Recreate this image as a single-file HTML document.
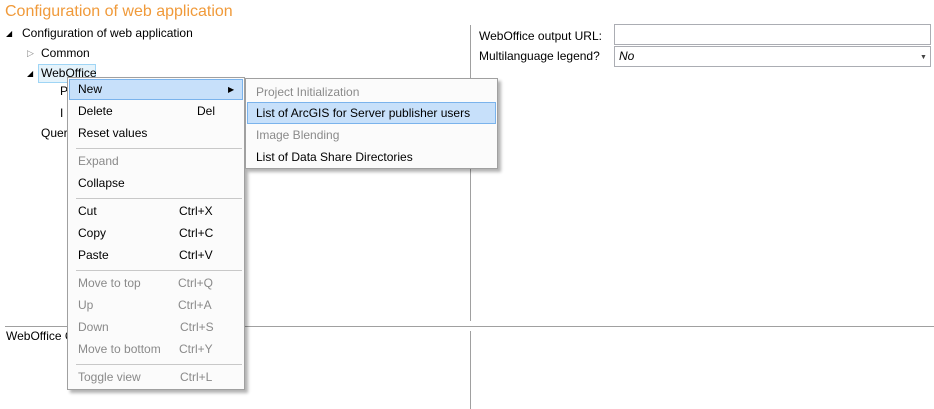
<!DOCTYPE html>
<html><head><style>
*{margin:0;padding:0;box-sizing:border-box}
body{width:934px;height:409px;background:#fff;position:relative;overflow:hidden;font-family:"Liberation Sans",sans-serif;font-size:12px;color:#000}
.a{position:absolute;white-space:nowrap;line-height:14px}
.title{left:5px;top:2px;font-size:16px;color:#f09a3a;line-height:20px}
.menu{position:absolute;background:#fbfbfb;border:1px solid #a0a0a0;box-shadow:3px 3px 3px rgba(0,0,0,0.3)}
.it{position:absolute;left:10px;line-height:14px;white-space:nowrap}
.g{color:#8a8a8a}
.sep{position:absolute;left:8px;right:2px;height:1px;background:#c8c8c8}
.hl{position:absolute;background:#c7e0fa;border:1px solid #7ab3ec}
</style></head><body>
<div class="a title">Configuration of web application</div>
<div class="a" style="left:6px;top:27px;font-size:8px">&#9698;</div>
<div class="a" style="left:22px;top:26px">Configuration of web application</div>
<div class="a" style="left:27px;top:46px;font-size:9px;color:#888">&#9655;</div>
<div class="a" style="left:41px;top:46px">Common</div>
<div class="a" style="left:27px;top:67px;font-size:8px">&#9698;</div>
<div style="position:absolute;left:38px;top:64px;width:58px;height:19px;background:#e5f3fb;border:1px solid #9fd5f5"></div>
<div class="a" style="left:41px;top:66px">WebOffice</div>
<div class="a" style="left:60px;top:84px">P</div>
<div class="a" style="left:60px;top:106px">I</div>
<div class="a" style="left:41px;top:126px">Query</div>
<div class="a" style="left:6px;top:329px">WebOffice C</div>
<div style="position:absolute;left:470px;top:25px;width:1px;height:296px;background:#a0a0a0"></div>
<div style="position:absolute;left:470px;top:331px;width:1px;height:78px;background:#a0a0a0"></div>
<div style="position:absolute;left:5px;top:326px;width:929px;height:1px;background:#a0a0a0"></div>
<div class="a" style="left:479px;top:29px">WebOffice output URL:</div>
<div class="a" style="left:479px;top:49px">Multilanguage legend?</div>
<div style="position:absolute;left:614px;top:24px;width:317px;height:21px;border:1px solid #abadb3;background:#fff"></div>
<div style="position:absolute;left:614px;top:46px;width:317px;height:21px;border:1px solid #abadb3;background:#fff"></div>
<div class="a" style="left:619px;top:49px;font-style:italic">No</div>
<div class="a" style="left:920px;top:51px;font-size:7px;color:#444">&#9660;</div>

<div class="menu" style="left:67px;top:77px;width:178px;height:313px">
 <div class="hl" style="left:1px;top:1px;width:174px;height:21px"></div>
 <div class="it" style="top:4px">New</div><div class="it" style="left:160px;top:5px;font-size:8px">&#9654;</div>
 <div class="it" style="top:26px">Delete</div><div class="it" style="left:129px;top:26px">Del</div>
 <div class="it" style="top:48px">Reset values</div>
 <div class="sep" style="top:70px"></div>
 <div class="it g" style="top:76px">Expand</div>
 <div class="it" style="top:98px">Collapse</div>
 <div class="sep" style="top:120px"></div>
 <div class="it" style="top:126px">Cut</div><div class="it" style="left:111px;top:126px">Ctrl+X</div>
 <div class="it" style="top:148px">Copy</div><div class="it" style="left:111px;top:148px">Ctrl+C</div>
 <div class="it" style="top:170px">Paste</div><div class="it" style="left:111px;top:170px">Ctrl+V</div>
 <div class="sep" style="top:192px"></div>
 <div class="it g" style="top:198px">Move to top</div><div class="it g" style="left:110px;top:198px">Ctrl+Q</div>
 <div class="it g" style="top:220px">Up</div><div class="it g" style="left:110px;top:220px">Ctrl+A</div>
 <div class="it g" style="top:242px">Down</div><div class="it g" style="left:112px;top:242px">Ctrl+S</div>
 <div class="it g" style="top:264px">Move to bottom</div><div class="it g" style="left:111px;top:264px">Ctrl+Y</div>
 <div class="sep" style="top:286px"></div>
 <div class="it g" style="top:292px">Toggle view</div><div class="it g" style="left:112px;top:292px">Ctrl+L</div>
</div>

<div class="menu" style="left:245px;top:78px;width:253px;height:91px">
 <div class="hl" style="left:1px;top:23px;width:249px;height:22px"></div>
 <div class="it g" style="top:6px">Project Initialization</div>
 <div class="it" style="top:27px">List of ArcGIS for Server publisher users</div>
 <div class="it g" style="top:49px">Image Blending</div>
 <div class="it" style="top:71px">List of Data Share Directories</div>
</div>
</body></html>
